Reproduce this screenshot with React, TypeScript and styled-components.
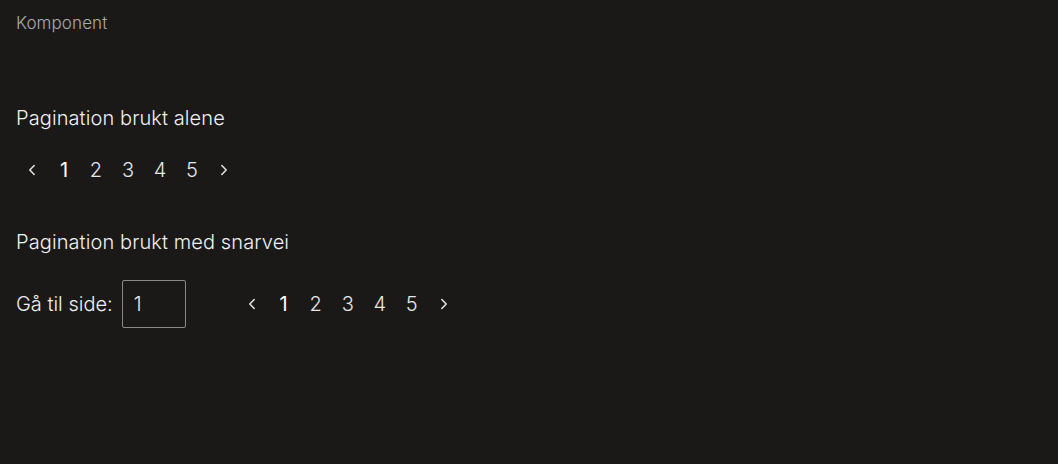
import React, { useState } from 'react';
import styled, { createGlobalStyle } from 'styled-components';

const GlobalStyle = createGlobalStyle`
  html, body {
    margin: 0;
    background: #1a1918;
  }
  body {
    font-family: Inter, "Noto Sans", sans-serif;
    color: #eeeeee;
  }
`;

const Page = styled.div`
  min-height: 464px;
  padding: 11px 16px 0;
  box-sizing: border-box;
  background: #1a1918;
`;

const Eyebrow = styled.div`
  font-size: 17px;
  line-height: 24px;
  color: #ababab;
  font-weight: 300;
  letter-spacing: 0.1px;
`;

const Heading = styled.h2<{ $top: number }>`
  margin: ${({ $top }) => $top}px 0 0;
  font-size: 20px;
  line-height: 28px;
  font-weight: 300;
  letter-spacing: 0.1px;
  color: #f0f0f0;
`;

const Nav = styled.nav`
  display: flex;
  align-items: center;
`;

const PageButton = styled.button<{ $active?: boolean }>`
  width: 32px;
  height: 44px;
  padding: 0;
  border: none;
  background: transparent;
  color: ${({ $active }) => ($active ? '#ffffff' : '#e6e6e6')};
  font-family: inherit;
  font-size: 20px;
  font-weight: ${({ $active }) => ($active ? 400 : 300)};
  display: flex;
  align-items: center;
  justify-content: center;
  cursor: pointer;
`;

const Row = styled.div<{ $top: number }>`
  display: flex;
  align-items: center;
  margin-top: ${({ $top }) => $top}px;
`;

const JumpLabel = styled.label`
  display: flex;
  align-items: center;
  gap: 9px;
  font-size: 20px;
  font-weight: 300;
  color: #f0f0f0;
  margin-right: 50px;
`;

const JumpInput = styled.input`
  width: 64px;
  height: 48px;
  box-sizing: border-box;
  border: 1px solid #8a8a8a;
  border-radius: 2px;
  background: transparent;
  color: #eeeeee;
  font-family: inherit;
  font-size: 20px;
  font-weight: 300;
  padding: 0 11px;
  outline: none;
`;

const Chevron = ({ dir }: { dir: 'left' | 'right' }) => (
  <svg width="14" height="14" viewBox="0 0 14 14" fill="none">
    <path
      d={dir === 'left' ? 'M9.2 2.5 L4.8 7 L9.2 11.5' : 'M4.8 2.5 L9.2 7 L4.8 11.5'}
      stroke="#e6e6e6"
      strokeWidth="1.5"
      strokeLinecap="round"
      strokeLinejoin="round"
    />
  </svg>
);

const Pagination = ({ current }: { current: number }) => (
  <Nav aria-label="Paginering">
    <PageButton aria-label="Forrige side">
      <Chevron dir="left" />
    </PageButton>
    {[1, 2, 3, 4, 5].map((n) => (
      <PageButton key={n} $active={n === current}>
        {n}
      </PageButton>
    ))}
    <PageButton aria-label="Neste side">
      <Chevron dir="right" />
    </PageButton>
  </Nav>
);

export default function App() {
  const [value, setValue] = useState('1');
  return (
    <>
      <GlobalStyle />
      <Page>
        <Eyebrow>Komponent</Eyebrow>
        <Heading $top={69}>Pagination brukt alene</Heading>
        <Row $top={16}>
          <Pagination current={1} />
        </Row>
        <Heading $top={36}>Pagination brukt med snarvei</Heading>
        <Row $top={24}>
          <JumpLabel>
            Gå til side:
            <JumpInput value={value} onChange={(e) => setValue(e.target.value)} />
          </JumpLabel>
          <Pagination current={1} />
        </Row>
      </Page>
    </>
  );
}
